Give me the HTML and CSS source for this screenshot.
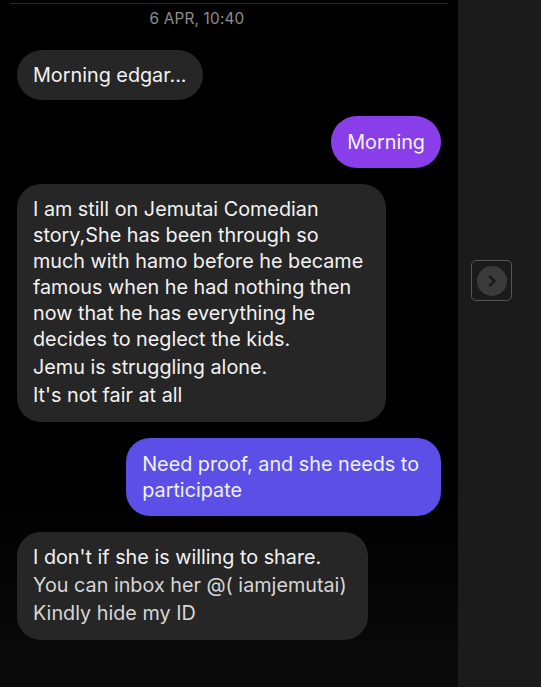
FILE: index.html
```html
<!DOCTYPE html>
<html>
<head>
<meta charset="utf-8">
<link rel="stylesheet" href="styles.css">
</head>
<body>
<div class="app">
  <main class="chat">
    <div class="topline"></div>
    <div class="date">6 APR, 10:40</div>
    <div class="thread">
      <div class="row in"><div class="bubble gray pill">Morning edgar...</div></div>
      <div class="row out"><div class="bubble purple pill tall">Morning</div></div>
      <div class="row in">
        <div class="bubble gray multi long">
          <div>I am still on Jemutai Comedian<br>story,She has been through so<br>much with hamo before he became<br>famous when he had nothing then<br>now that he has everything he<br>decides to neglect the kids.</div>
          <div class="para">Jemu is struggling alone.</div>
          <div class="para">It's not fair at all</div>
        </div>
      </div>
      <div class="row out"><div class="bubble violet multi">Need proof, and she needs to<br>participate</div></div>
      <div class="row in">
        <div class="bubble gray multi loose">I don't if she is willing to share.<br><span class="dim">You can inbox her @( iamjemutai)<br>Kindly hide my ID</span></div>
      </div>
    </div>
  </main>
  <aside class="side">
    <button class="next" aria-label="Next">
      <span class="circle">
        <svg width="14" height="14" viewBox="0 0 14 14"><path d="M5 2.5 L9.5 7 L5 11.5" fill="none" stroke="#1c1c1c" stroke-width="2.6" stroke-linecap="round" stroke-linejoin="round"/></svg>
      </span>
    </button>
  </aside>
</div>
</body>
</html>
```
FILE: styles.css
```css
* { box-sizing: border-box; }
html, body { margin: 0; padding: 0; }
body {
  width: 541px;
  height: 687px;
  overflow: hidden;
  background: #1a1a1a;
  font-family: Inter, "Noto Sans", sans-serif;
}
.app {
  display: flex;
  height: 687px;
}
.chat {
  width: 458px;
  height: 687px;
  background: linear-gradient(#000 0%, #000 70%, #0b0b0b 100%);
  padding: 0 17px;
  display: flex;
  flex-direction: column;
}
.topline {
  height: 1px;
  background: #262626;
  margin: 3px -7px 0 -7px;
}
.date {
  text-align: center;
  color: #8e8e8e;
  font-size: 15.3px;
  line-height: 20px;
  margin-top: 5px;
  margin-right: 64px;
  letter-spacing: 0.2px;
}
.thread {
  margin-top: 21px;
  display: flex;
  flex-direction: column;
  gap: 16px;
}
.row { display: flex; }
.row.in { justify-content: flex-start; }
.row.out { justify-content: flex-end; }
.bubble {
  color: #f2f2f2;
  font-size: 19.8px;
  line-height: 26px;
  padding: 12px 16px;
}
.pill {
  border-radius: 26px;
}
.tall { padding: 13px 16px; }
.multi {
  border-radius: 24px;
}
.long { width: 369px; padding: 12px 16px 14px 16px; }
.gray { background: #262626; }
.purple { background: #8a3ee9; }
.violet { background: #5b4fe8; padding: 13px 22px 13px 16px; }
.para { margin-top: 2px; }
.loose { line-height: 28px; padding: 11px 21px 13px 16px; }
.dim { color: #d6d6d6; }
.side {
  flex: 1;
  background: #1b1b1b;
  position: relative;
}
.next {
  position: absolute;
  left: 13px;
  top: 260px;
  width: 41px;
  height: 41px;
  border: 1.5px solid #555;
  border-radius: 5px;
  background: transparent;
  padding: 0;
  display: flex;
  align-items: center;
  justify-content: center;
}
.circle {
  width: 30px;
  height: 30px;
  border-radius: 50%;
  background: #3b3b3b;
  display: flex;
  align-items: center;
  justify-content: center;
}
```
